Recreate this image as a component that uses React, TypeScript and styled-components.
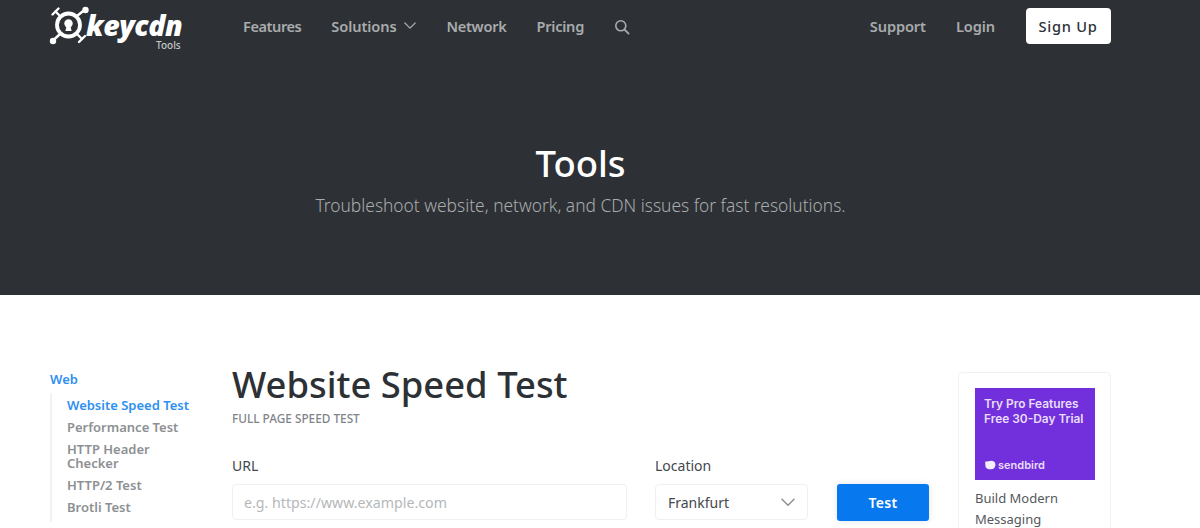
import React from "react";
import styled, { createGlobalStyle } from "styled-components";

const Global = createGlobalStyle`
  html, body { margin: 0; padding: 0; background: #fff; overflow: hidden; }
  body { font-family: "Noto Sans", "Open Sans", sans-serif; color: #2d3135; }
  * { box-sizing: border-box; }
`;

const Page = styled.div`
  width: 1200px;
  height: 528px;
  overflow: hidden;
`;

const Dark = styled.header`
  height: 295px;
  background: #2d3135;
  padding: 8px 89px 0 50px;
`;

const NavBar = styled.nav`
  display: flex;
  align-items: center;
  height: 36px;
`;

const Logo = styled.div`
  position: relative;
  width: 133px;
  height: 44px;
  margin-top: -2px;
  margin-right: 60px;
  display: flex;
  align-items: center;
`;

const LogoWord = styled.span`
  font-family: "Open Sans", sans-serif;
  font-size: 28.5px;
  font-weight: 800;
  font-style: italic;
  color: #fff;
  letter-spacing: -0.45px;
  line-height: 20px;
  margin-left: -2px;
  margin-top: -1px;
`;

const LogoSub = styled.span`
  position: absolute;
  left: 106px;
  top: 37px;
  font-size: 10px;
  line-height: 11px;
  font-weight: 500;
  color: #c4c6c8;
`;

const NavGroup = styled.div<{ $gap: number }>`
  display: flex;
  align-items: center;
  gap: ${(p) => p.$gap}px;
`;

const NavLink = styled.a<{ $ls?: number }>`
  font-size: 14.6px;
  font-weight: 600;
  color: #a9abad;
  line-height: 20px;
  display: flex;
  align-items: center;
  letter-spacing: ${(p) => p.$ls ?? -0.1}px;
`;

const NavChevron = styled.span`
  display: flex;
  margin-left: 8px;
`;

const NavSearch = styled.span`
  display: flex;
  margin-top: 2px;
`;

const Spacer = styled.div`
  flex: 1;
`;

const SignUp = styled.button`
  width: 85px;
  height: 36px;
  margin-left: 31px;
  border: 0;
  border-radius: 4px;
  background: #fff;
  color: #2d3135;
  font-family: inherit;
  font-size: 14.6px;
  font-weight: 500;
  letter-spacing: 0.75px;
  padding: 0 1px 0 0;
`;

const Hero = styled.div`
  display: flex;
  flex-direction: column;
  align-items: center;
  padding-top: 95px;
`;

const HeroTitle = styled.h1`
  margin: 0;
  font-size: 36.5px;
  font-weight: 500;
  line-height: 48px;
  color: #fff;
`;

const HeroSub = styled.p`
  margin: 6px 0 0;
  font-size: 17.37px;
  font-weight: 300;
  line-height: 24px;
  color: #a9abad;
`;

const Body = styled.main`
  display: grid;
  grid-template-columns: 182px 726px 153px;
  padding: 76px 0 0 50px;
`;

const Side = styled.aside`
  display: flex;
  flex-direction: column;
`;

const SideHead = styled.a`
  font-size: 13px;
  font-weight: 600;
  line-height: 18px;
  color: #2e8ff0;
  margin-top: -1px;
`;

const SideList = styled.ul`
  list-style: none;
  margin: 5px 0 0;
  padding: 5px 0 0 15px;
  border-left: 2px solid #f1f2f3;
  width: 146px;
`;

const SideItem = styled.li<{ $active?: boolean }>`
  font-size: 13px;
  font-weight: 600;
  line-height: 14px;
  color: ${(p) => (p.$active ? "#2e8ff0" : "#8d9093")};
  margin-bottom: 8px;
  white-space: pre-line;
`;

const Main = styled.section`
  display: flex;
  flex-direction: column;
`;

const Title = styled.h2`
  margin: -12px 0 0;
  font-size: 36.4px;
  font-weight: 500;
  line-height: 50px;
  color: #2d3135;
`;

const Eyebrow = styled.div`
  font-size: 11.8px;
  font-weight: 500;
  line-height: 16px;
  color: #80848a;
  margin-top: 1px;
`;

const FormRow = styled.div`
  display: flex;
  align-items: flex-end;
  margin-top: 30px;
`;

const Field = styled.div<{ $w: number; $mr: number }>`
  width: ${(p) => p.$w}px;
  margin-right: ${(p) => p.$mr}px;
  margin-bottom: 1px;
`;

const Label = styled.label`
  display: block;
  font-size: 14px;
  line-height: 20px;
  color: #43484d;
  margin-bottom: 8px;
`;

const Input = styled.div`
  height: 36px;
  border: 1px solid #eff0f1;
  border-radius: 4px;
  padding: 0 11px;
  display: flex;
  align-items: center;
  justify-content: space-between;
  font-size: 14.2px;
  color: #b5b8ba;
`;

const SelectBox = styled(Input)`
  color: #43484d;
  padding: 0 12px;
  font-size: 14px;
`;

const TestButton = styled.button`
  width: 92px;
  height: 37px;
  border: 0;
  border-radius: 3px;
  background: #0878ee;
  color: #fff;
  font-family: inherit;
  font-size: 14px;
  font-weight: 600;
  letter-spacing: 0.3px;
  box-shadow: 0 0 6px rgba(8, 50, 100, 0.12);
`;

const Ad = styled.aside`
  margin-top: 1px;
  width: 153px;
  height: 200px;
  border: 1px solid #f0f1f2;
  border-radius: 4px;
  padding: 15px 15px 0 16px;
`;

const AdImage = styled.div`
  position: relative;
  width: 120px;
  height: 92px;
  background: #7230dc;
  padding: 8px 9px;
  color: #e9defa;
`;

const AdHead = styled.div`
  font-family: "Inter", sans-serif;
  font-size: 11.9px;
  font-weight: 600;
  line-height: 15px;
  white-space: nowrap;
`;

const AdBrand = styled.div`
  position: absolute;
  left: 9px;
  bottom: 9px;
  display: flex;
  align-items: center;
  gap: 2px;
  font-family: "Inter", sans-serif;
  font-size: 11px;
  font-weight: 600;
  line-height: 12px;
`;

const AdText = styled.div`
  margin-top: 8px;
  font-size: 13px;
  line-height: 20.5px;
  color: #55595d;
`;

const KeyLogo = () => (
  <svg width="38" height="38" viewBox="0 0 38 38" fill="none" style={{ flex: "none", overflow: "visible" }}>
    <g stroke="#fff" strokeWidth="2.4" strokeLinecap="round">
      <path d="M9 9 5.500 5.500" />
      <path d="M8.500 2.500 2.500 8.500" />
      <path d="M27 10 35 3.500" />
      <path d="M9.500 28.500 3 34.500" />
      <path d="M27 28 32 33" />
      <path d="M29 36 35 30" />
    </g>
    <circle cx="35.500" cy="4" r="3.200" fill="#fff" />
    <circle cx="3" cy="35" r="3.200" fill="#fff" />
    <circle cx="18.500" cy="19" r="11.500" stroke="#fff" strokeWidth="3.800" />
    <circle cx="18.500" cy="17.500" r="4.200" fill="#fff" />
    <path d="M16.800 19h3.400l1.400 6h-6.200z" fill="#fff" />
  </svg>
);

const Chevron = ({ color, w }: { color: string; w: number }) => (
  <svg width={w} height={w * 0.6} viewBox="0 0 14 8" fill="none">
    <path d="M1 1l6 6 6-6" stroke={color} strokeWidth="1.5" strokeLinecap="round" strokeLinejoin="round" />
  </svg>
);

const SearchIcon = () => (
  <svg width="16" height="16" viewBox="0 0 16 16" fill="none">
    <circle cx="6.800" cy="6.800" r="5" stroke="#a9abad" strokeWidth="1.600" />
    <path d="M10.600 10.600 14.600 14.600" stroke="#a9abad" strokeWidth="1.800" strokeLinecap="round" />
  </svg>
);

const BrandMark = () => (
  <svg width="12" height="10" viewBox="0 0 11 9">
    <path d="M1 1.500 7 .5c2.500 0 3.500 2 3.500 4s-1.500 4-4 4c-2 0-4-.5-5-2z" fill="#f3edfc" />
  </svg>
);

export default function App() {
  return (
    <Page>
      <Global />
      <Dark>
        <NavBar>
          <Logo>
            <KeyLogo />
            <LogoWord>keycdn</LogoWord>
            <LogoSub>Tools</LogoSub>
          </Logo>
          <NavGroup $gap={30}>
            <NavLink $ls={-0.45}>Features</NavLink>
            <NavLink>
              Solutions
              <NavChevron>
                <Chevron color="#a9abad" w={12} />
              </NavChevron>
            </NavLink>
            <NavLink $ls={-0.3}>Network</NavLink>
            <NavLink $ls={-0.25}>Pricing</NavLink>
            <NavSearch>
              <SearchIcon />
            </NavSearch>
          </NavGroup>
          <Spacer />
          <NavGroup $gap={30}>
            <NavLink>Support</NavLink>
            <NavLink>Login</NavLink>
          </NavGroup>
          <SignUp>Sign Up</SignUp>
        </NavBar>
        <Hero>
          <HeroTitle>Tools</HeroTitle>
          <HeroSub>Troubleshoot website, network, and CDN issues for fast resolutions.</HeroSub>
        </Hero>
      </Dark>
      <Body>
        <Side>
          <SideHead>Web</SideHead>
          <SideList>
            <SideItem $active>Website Speed Test</SideItem>
            <SideItem>Performance Test</SideItem>
            <SideItem>{"HTTP Header\nChecker"}</SideItem>
            <SideItem>HTTP/2 Test</SideItem>
            <SideItem>Brotli Test</SideItem>
          </SideList>
        </Side>
        <Main>
          <Title>Website Speed Test</Title>
          <Eyebrow>FULL PAGE SPEED TEST</Eyebrow>
          <FormRow>
            <Field $w={395} $mr={28}>
              <Label>URL</Label>
              <Input>e.g. https://www.example.com</Input>
            </Field>
            <Field $w={153} $mr={29}>
              <Label>Location</Label>
              <SelectBox>
                Frankfurt
                <Chevron color="#8d9093" w={14} />
              </SelectBox>
            </Field>
            <TestButton>Test</TestButton>
          </FormRow>
        </Main>
        <Ad>
          <AdImage>
            <AdHead>
              Try Pro Features
              <br />
              Free 30-Day Trial
            </AdHead>
            <AdBrand>
              <BrandMark />
              sendbird
            </AdBrand>
          </AdImage>
          <AdText>
            Build Modern
            <br />
            Messaging
          </AdText>
        </Ad>
      </Body>
    </Page>
  );
}
